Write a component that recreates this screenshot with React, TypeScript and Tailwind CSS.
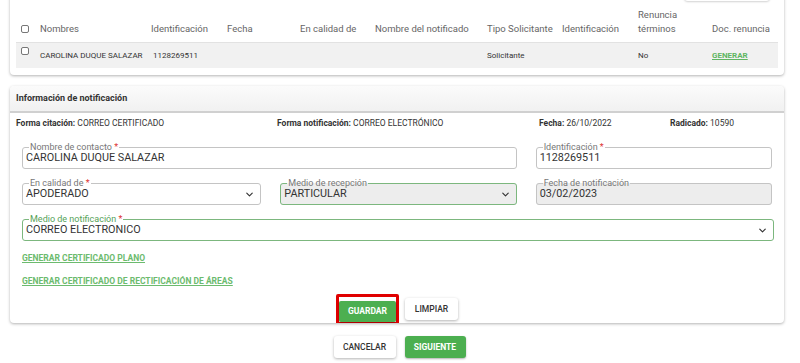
import { ChevronDown } from "lucide-react";

const cols = "grid grid-cols-[22px_111px_76px_73px_75px_112px_75px_76px_74px_56px]";

function Check() {
  return <span className="inline-block w-[8px] h-[8px] border border-[#777] rounded-[2px] bg-white" />;
}

function Field({
  label,
  value,
  req,
  select,
  disabled,
  green,
  className = "",
}: {
  label: string;
  value: string;
  req?: boolean;
  select?: boolean;
  disabled?: boolean;
  green?: boolean;
  className?: string;
}) {
  return (
    <fieldset
      className={`h-[27px] border rounded-[3px] px-[3px] ${
        green ? "border-[#7cb77e]" : "border-[#c4c4c4]"
      } ${disabled ? "bg-[#ededed]" : "bg-white"} ${className}`}
    >
      <legend
        className={`text-[9px] leading-[10px] px-[1px] ml-[3px] ${
          green && !disabled ? "text-[#55a257]" : "text-[#777]"
        }`}
      >
        {label}
        {req && <span className="text-[#d33]"> *</span>}
      </legend>
      <div className="flex items-center justify-between -mt-[1px] pr-[2px]">
        <span className="text-[10.8px] leading-[14px] text-[#333]">{value}</span>
        {select && <ChevronDown size={11} strokeWidth={2.5} className="text-[#333]" />}
      </div>
    </fieldset>
  );
}

export default function App() {
  return (
    <div className="w-[800px] h-[363px] overflow-hidden bg-white font-['Roboto',sans-serif] text-[#333]">
      {/* table card */}
      <div className="mx-[10px] w-[774px] -mt-[10px] bg-white rounded-[4px] shadow-[0_1px_3px_rgba(0,0,0,0.3)] px-[6px] pb-[7px]">
        <div className="flex justify-end h-[16px]">
          <div className="w-[86px] h-[11px] mr-[8px] rounded-[4px] shadow-[0_1px_2px_rgba(0,0,0,0.18)]" />
        </div>
        <div className={`${cols} items-end pb-[7px] h-[36px] text-[9.5px] leading-[13px] text-[#666] whitespace-nowrap`}>
          <div className="pl-[5px] flex pb-[2px]"><Check /></div>
          <div className="pl-[2px]">Nombres</div>
          <div className="pl-[2px]">Identificación</div>
          <div className="pl-[2px]">Fecha</div>
          <div className="pl-[2px]">En calidad de</div>
          <div className="pl-[2px]">Nombre del notificado</div>
          <div className="pl-[2px]">Tipo Solicitante</div>
          <div className="pl-[2px]">Identificación</div>
          <div className="pl-[2px] leading-[14px] -mb-[1px]">Renuncia<br />términos</div>
          <div className="pl-[2px]">Doc. renuncia</div>
        </div>
        <div className={`${cols} items-center h-[26px] bg-[#f1f1f1] border-t border-[#e2e2e2] text-[8px] text-[#333] whitespace-nowrap`}>
          <div className="pl-[5px] flex -mt-[9px]"><Check /></div>
          <div className="pl-[2px]">CAROLINA DUQUE SALAZAR</div>
          <div className="pl-[4px]">1128269511</div>
          <div />
          <div />
          <div />
          <div className="pl-[2px]">Solicitante</div>
          <div />
          <div className="pl-[2px]">No</div>
          <div className="pl-[2px] font-bold text-[#5fb662] underline">GENERAR</div>
        </div>
      </div>

      {/* notification card */}
      <div className="mx-[10px] mt-[11px] w-[774px] h-[237px] bg-white rounded-[4px] shadow-[0_1px_3px_rgba(0,0,0,0.3)] overflow-hidden">
        <div className="h-[27px] flex items-center px-[6px] bg-gradient-to-b from-[#fbfbfb] to-[#f1f1f1] border-b-2 border-[#d0d0d0] text-[9px] font-bold text-[#333]">
          Información de notificación
        </div>
        <div className="flex items-center h-[20px] pl-[6px] text-[8.5px] text-[#333]">
          <div className="w-[261px]"><b>Forma citación:</b> CORREO CERTIFICADO</div>
          <div className="w-[262px]"><b>Forma notificación:</b> CORREO ELECTRÓNICO</div>
          <div className="w-[131px]"><b>Fecha:</b> 26/10/2022</div>
          <div><b>Radicado:</b> 10590</div>
        </div>
        <div className="px-[12px] mt-[9px] flex flex-col gap-[9px]">
          <div className="flex gap-[19px]">
            <Field className="w-[496px]" label="Nombre de contacto" req value="CAROLINA DUQUE SALAZAR" />
            <Field className="w-[237px]" label="Identificación" req value="1128269511" />
          </div>
          <div className="flex gap-[19px]">
            <Field className="w-[240px]" label="En calidad de" req value="APODERADO" select />
            <Field className="w-[237px]" label="Medio de recepción" value="PARTICULAR" select disabled green />
            <Field className="w-[237px]" label="Fecha de notificación" value="03/02/2023" disabled />
          </div>
          <Field className="w-[752px]" label="Medio de notificación" req value="CORREO ELECTRONICO" select green />
        </div>
        <div className="px-[12px] mt-[13px] flex flex-col gap-[14px] text-[8.5px] font-bold text-[#6cbb6e] underline leading-[9px]">
          <span>GENERAR CERTIFICADO PLANO</span>
          <span>GENERAR CERTIFICADO DE RECTIFICACIÓN DE ÁREAS</span>
        </div>
        <div className="flex justify-center items-center gap-[6px] mt-[8px]">
          <div className="border-[3px] border-[#e00000] rounded-[2px]">
            <button className="w-[57px] h-[21px] bg-[#4caf50] text-white text-[8.5px] font-bold rounded-[2px] shadow-[0_1px_2px_rgba(0,0,0,0.3)]">
              GUARDAR
            </button>
          </div>
          <button className="w-[53px] h-[22px] bg-white text-[#333] text-[8.5px] font-medium rounded-[3px] shadow-[0_1px_3px_rgba(0,0,0,0.3)]">
            LIMPIAR
          </button>
        </div>
      </div>

      <div className="flex justify-center gap-[9px] mt-[13px] -ml-[1px]">
        <button className="w-[62px] h-[22px] bg-white text-[#333] text-[8.5px] font-medium rounded-[3px] shadow-[0_1px_3px_rgba(0,0,0,0.3)]">
          CANCELAR
        </button>
        <button className="w-[61px] h-[22px] bg-[#4caf50] text-white text-[8.5px] font-bold rounded-[3px] shadow-[0_1px_2px_rgba(0,0,0,0.3)]">
          SIGUIENTE
        </button>
      </div>
    </div>
  );
}
